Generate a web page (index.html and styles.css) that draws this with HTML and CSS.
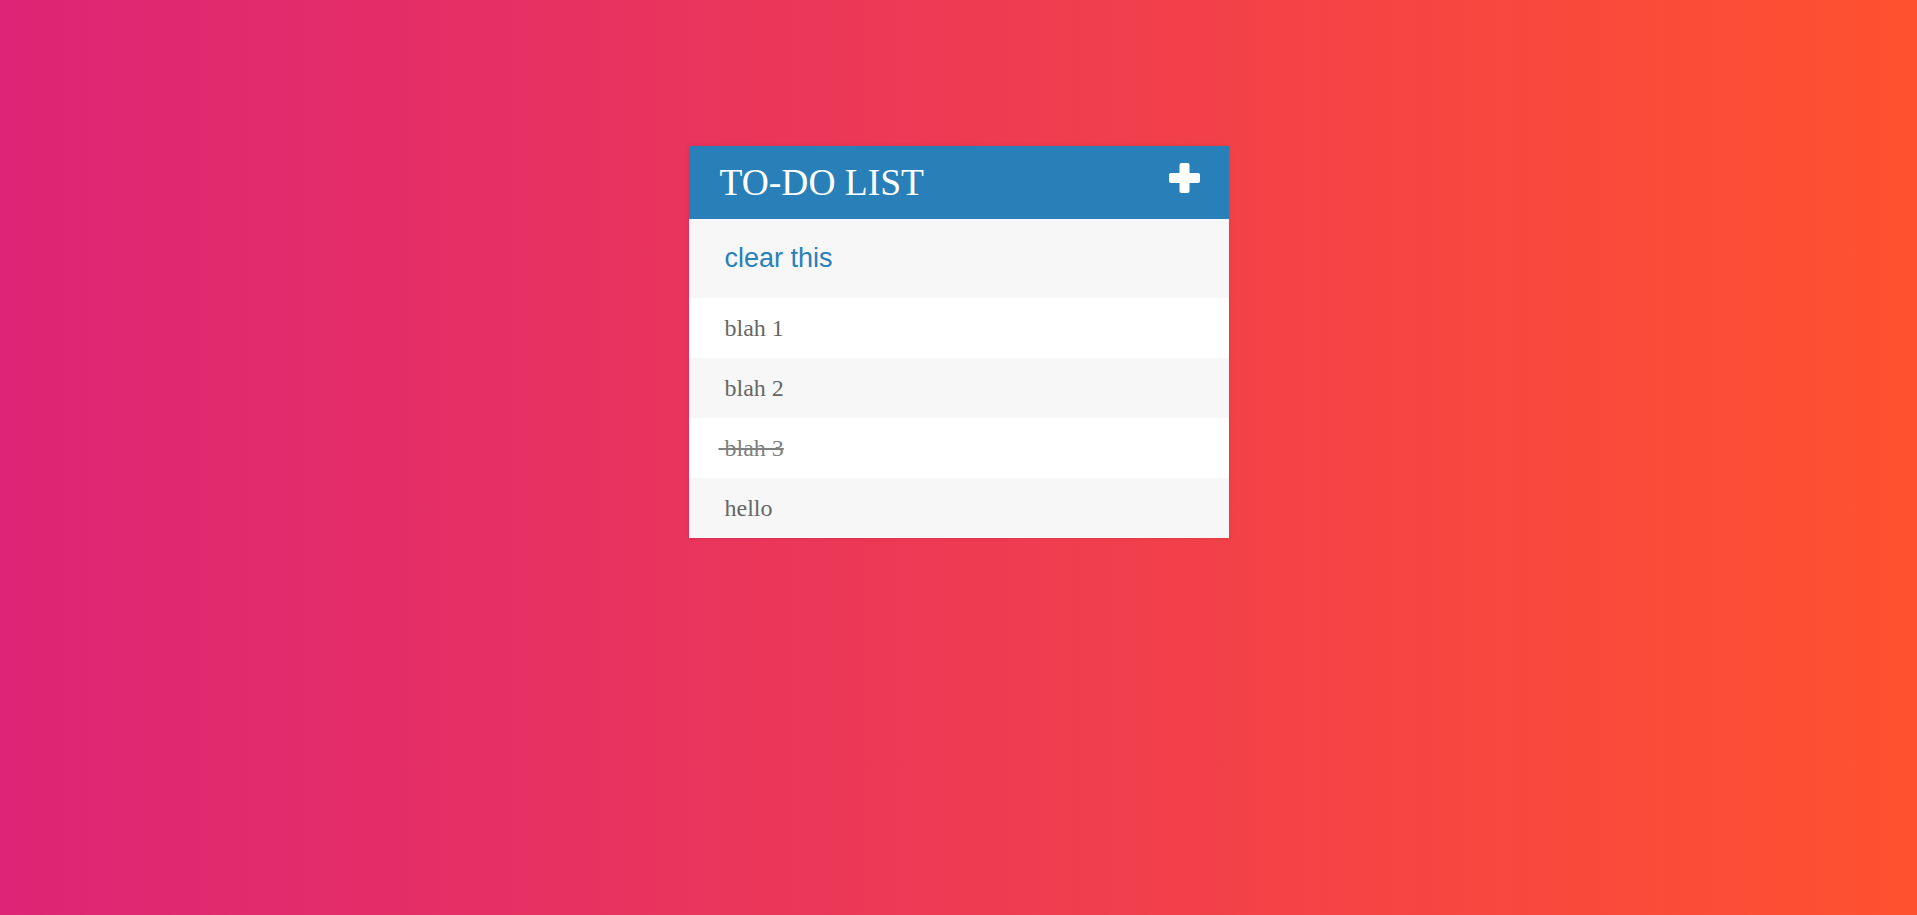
FILE: index.html
```html
<!DOCTYPE html>
<html>
<head>
<meta charset="utf-8">
<title>To-Do List</title>
<link rel="stylesheet" href="styles.css">
</head>
<body>
<div class="card">
  <h1 class="title">
    <span class="title-text">To-Do List</span>
    <svg class="plus" width="31" height="30" viewBox="0 0 31 30" aria-hidden="true">
      <path d="M10.5 2 Q10.5 0 12.5 0 H18.5 Q20.5 0 20.5 2 V10 H29 Q31 10 31 12 V18 Q31 20 29 20 H20.5 V28 Q20.5 30 18.5 30 H12.5 Q10.5 30 10.5 28 V20 H2 Q0 20 0 18 V12 Q0 10 2 10 H10.5 Z" fill="#fff"/>
    </svg>
  </h1>
  <input class="new-todo" type="text" value="clear this">
  <ul class="list">
    <li class="item"><span class="del"></span> blah 1</li>
    <li class="item"><span class="del"></span> blah 2</li>
    <li class="item completed"><span class="del"></span> blah 3</li>
    <li class="item"><span class="del"></span> hello</li>
  </ul>
</div>
</body>
</html>
```

FILE: styles.css
```css
html, body {
  margin: 0;
  padding: 0;
}
body {
  min-height: 915px;
  background: linear-gradient(to right, #dd2476, #ff512f);
  font-family: "Liberation Serif", "Times New Roman", serif;
  overflow: hidden;
}
.card {
  width: 540px;
  margin: 146px auto 0;
  background: #f7f7f7;
  box-shadow: 0 0 4px rgba(0, 0, 0, 0.1);
}
.title {
  margin: 0;
  background: #2980b9;
  color: #fff;
  padding: 15px 29px 15px 31px;
  height: 73px;
  box-sizing: border-box;
  display: flex;
  justify-content: space-between;
  align-items: flex-start;
  font-weight: normal;
  font-size: 37.5px;
  line-height: 43px;
  text-transform: uppercase;
}
.title-text {
  display: block;
}
.plus {
  display: block;
  margin-top: 2px;
}
.new-todo {
  display: block;
  width: 100%;
  height: 79px;
  box-sizing: border-box;
  margin: 0;
  padding: 0 13px 0 33px;
  border: 3px solid transparent;
  background: #f7f7f7;
  color: #2980b9;
  font-family: "Liberation Sans", Arial, sans-serif;
  font-size: 27px;
  outline: none;
}
.list {
  list-style: none;
  margin: 0;
  padding: 0;
}
.item {
  height: 60px;
  line-height: 60px;
  background: #fff;
  color: #666;
  font-size: 24px;
}
.item:nth-child(2n) {
  background: #f7f7f7;
}
.del {
  display: inline-block;
  width: 0;
  height: 60px;
  margin-right: 30px;
  vertical-align: top;
}
.completed {
  color: gray;
  text-decoration: line-through;
}
```
